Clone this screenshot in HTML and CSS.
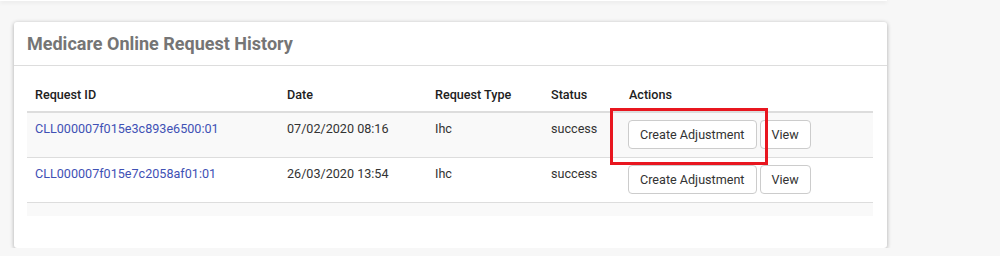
FILE: index.html
```html
<!DOCTYPE html>
<html>
<head>
<meta name="viewport" content="width=device-width, initial-scale=1">
<title>Medicare Online Request History</title>
<link rel="stylesheet" href="styles.css">
</head>
<body>
<div class="prev-panel"></div>
<div class="panel">
    <div class="panel-heading">
        <h3>Medicare Online Request History</h3>
    </div>
    <div class="panel-body">
        <table class="history">
            <colgroup>
                <col class="col-id">
                <col class="col-date">
                <col class="col-type">
                <col class="col-status">
                <col>
            </colgroup>
            <thead>
                <tr>
                    <th>Request ID</th>
                    <th>Date</th>
                    <th>Request Type</th>
                    <th>Status</th>
                    <th>Actions</th>
                </tr>
            </thead>
            <tbody>
                <tr>
                    <td><a href="#">CLL000007f015e3c893e6500:01</a></td>
                    <td>07/02/2020 08:16</td>
                    <td>Ihc</td>
                    <td>success</td>
                    <td class="actions-cell">
                        <div class="actions">
                            <button class="btn">Create Adjustment</button>
                            <button class="btn">View</button>
                        </div>
                    </td>
                </tr>
                <tr>
                    <td><a href="#">CLL000007f015e7c2058af01:01</a></td>
                    <td>26/03/2020 13:54</td>
                    <td>Ihc</td>
                    <td>success</td>
                    <td class="actions-cell">
                        <div class="actions">
                            <button class="btn">Create Adjustment</button>
                            <button class="btn">View</button>
                        </div>
                    </td>
                </tr>
                <tr class="empty-row">
                    <td colspan="5"></td>
                </tr>
            </tbody>
        </table>
    </div>
    <div class="highlight"></div>
</div>
</body>
</html>
```

FILE: styles.css
```css
body {
	margin: 0;
	background: #f7f7f7;
	font-family: Roboto, "Liberation Sans", sans-serif;
	font-size: 12.6px;
	color: #333;
}
.prev-panel {
	width: 887px;
	height: 1px;
	background: #fff;
	box-shadow: 0 1px 4px rgba(0,0,0,0.18);
}
.panel {
	position: relative;
	margin: 21px 0 0 14px;
	width: 873px;
	background: #fff;
	border-radius: 3px;
	box-shadow: 0 1px 4px rgba(0,0,0,0.32);
}
.panel-heading {
	height: 43px;
	padding: 0 13px;
	display: flex;
	align-items: center;
	border-bottom: 1px solid #ddd;
	h3 {
		margin: 0;
		font-size: 18px;
		font-weight: 700;
		color: #757575;
	}
}
.panel-body {
	padding: 12px 14px 32px 13px;
}
.history {
	width: 100%;
	border-collapse: collapse;
	table-layout: fixed;
	.col-id { width: 252px; }
	.col-date { width: 148px; }
	.col-type { width: 116px; }
	.col-status { width: 78px; }
	th {
		text-align: left;
		font-weight: 500;
		color: #212121;
		padding: 8px;
		line-height: 17px;
		border-bottom: 2px solid #ddd;
	}
	td {
		padding: 7px 8px 8px;
		line-height: 17px;
		vertical-align: top;
		border-top: 1px solid #ddd;
	}
	td.actions-cell {
		padding-left: 7px;
	}
	tbody tr:nth-child(odd) td {
		background: #f9f9f9;
	}
	a {
		color: #3f51b5;
		text-decoration: none;
	}
	.empty-row td {
		padding: 0;
		height: 13px;
	}
}
.actions {
	display: flex;
	gap: 3px;
}
.btn {
	height: 29px;
	padding: 0 11px;
	border: 1px solid #ccc;
	border-radius: 4px;
	background: #fff;
	font-family: inherit;
	font-size: 12.6px;
	color: #333;
}
.highlight {
	position: absolute;
	left: 596px;
	top: 86px;
	width: 152px;
	height: 51px;
	border: 3px solid #e8161f;
}
```
